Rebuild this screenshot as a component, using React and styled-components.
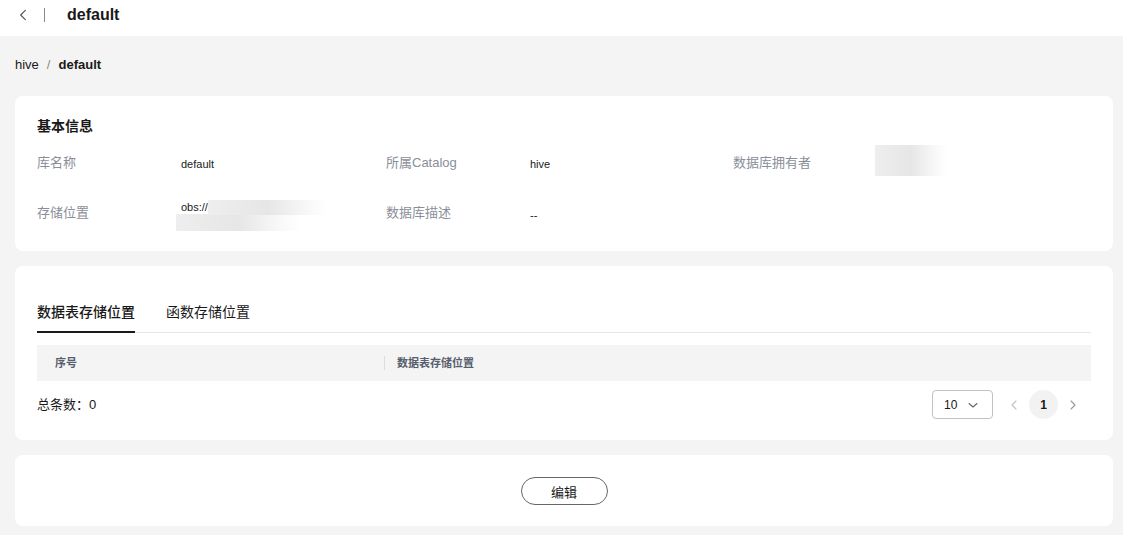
import React from "react";
import styled, { createGlobalStyle } from "styled-components";

const GlobalStyle = createGlobalStyle`
  html, body {
    margin: 0;
    padding: 0;
    background: #f4f4f4;
    font-family: "Liberation Sans", "Noto Sans CJK SC", sans-serif;
    color: #191919;
  }
  * { box-sizing: border-box; }
`;

const Page = styled.div`
  width: 1123px;
  min-height: 535px;
  background: #f4f4f4;
`;

const TopBar = styled.div`
  height: 36px;
  background: #fff;
  display: flex;
  align-items: center;
  padding-left: 16px;
  padding-bottom: 7px;
`;

const BackButton = styled.button`
  background: none;
  border: none;
  padding: 0;
  width: 14px;
  height: 14px;
  display: flex;
  align-items: center;
  justify-content: center;
  cursor: pointer;
`;

const Divider = styled.span`
  width: 1px;
  height: 14px;
  background: #8a8a8a;
  margin: 0 22px 0 14px;
`;

const Title = styled.h1`
  margin: 0;
  font-size: 16px;
  font-weight: 700;
  color: #191919;
`;

const Content = styled.div`
  padding: 0 10px 10px 15px;
  display: flex;
  flex-direction: column;
  gap: 15px;
`;

const Breadcrumb = styled.div`
  height: 60px;
  display: flex;
  align-items: center;
  font-size: 13px;
  color: #191919;
  padding-bottom: 4px;
  margin-bottom: -15px;
`;

const Crumb = styled.span`
  font-weight: ${p => (p.$current ? 700 : 400)};
`;

const Slash = styled.span`
  color: #8a8a8a;
  margin: 0 8px;
`;

const Card = styled.section`
  background: #fff;
  border-radius: 8px;
  padding: ${p => p.$pad || "20px 22px"};
`;

const SectionTitle = styled.h3`
  margin: 0 0 14px;
  font-size: 14px;
  font-weight: 700;
  line-height: 20px;
  color: #191919;
`;

const InfoGrid = styled.div`
  display: grid;
  grid-template-columns: 349px 347px 1fr;
  row-gap: 14px;
`;

const InfoItem = styled.div`
  display: flex;
  align-items: flex-start;
  min-height: 36px;
`;

const Label = styled.div`
  width: 144px;
  flex-shrink: 0;
  font-size: 13px;
  color: #8a8e99;
  line-height: 20px;
  padding-top: 3px;
`;

const Value = styled.div`
  font-size: 11px;
  color: #191919;
  line-height: 20px;
  padding-top: ${p => p.$top || "4px"};
`;

const Blur = styled.div`
  width: ${p => p.$w}px;
  height: ${p => p.$h}px;
  margin-left: ${p => p.$ml || 0}px;
  margin-top: ${p => p.$mt || 0}px;
  background: linear-gradient(90deg, #eeeeee 0%, #e6e6e6 50%, rgba(240,240,240,0.4) 85%, rgba(255,255,255,0) 100%);
`;

const ObsLine = styled.div`
  display: flex;
  align-items: flex-start;
  height: 14px;
  line-height: 14px;
`;

const Tabs = styled.div`
  display: flex;
  gap: 31px;
  border-bottom: 1px solid #e6e6e6;
  height: 40px;
  align-items: flex-end;
`;

const Tab = styled.div`
  font-size: 14px;
  line-height: 20px;
  padding-bottom: 9px;
  color: #191919;
  font-weight: ${p => (p.$active ? 500 : 400)};
  border-bottom: 2px solid ${p => (p.$active ? "#191919" : "transparent")};
  margin-bottom: -1px;
`;

const TableHead = styled.div`
  margin-top: 12px;
  height: 36px;
  background: #f4f4f4;
  display: grid;
  grid-template-columns: 347px 1fr;
  align-items: center;
`;

const HeadCell = styled.div`
  font-size: 11px;
  font-weight: 700;
  color: #575d6c;
  padding-left: ${p => (p.$first ? "18px" : "12px")};
  border-left: ${p => (p.$first ? "none" : "1px solid #dcdcdc")};
  line-height: 14px;
`;

const Footer = styled.div`
  display: flex;
  align-items: center;
  justify-content: space-between;
  margin-top: 9px;
  height: 29px;
`;

const Total = styled.div`
  font-size: 13px;
  color: #191919;
  margin-top: -2px;
`;

const Pager = styled.div`
  display: flex;
  align-items: center;
  margin-right: 11px;
`;

const Select = styled.div`
  width: 61px;
  height: 29px;
  border: 1px solid #c2c2c2;
  border-radius: 4px;
  display: flex;
  align-items: center;
  justify-content: space-between;
  padding: 0 13px 0 11px;
  font-size: 12px;
  color: #191919;
  margin-right: 14px;
`;

const Arrow = styled.span`
  width: 14px;
  display: flex;
  align-items: center;
  justify-content: center;
`;

const PageNum = styled.span`
  width: 29px;
  height: 29px;
  border-radius: 50%;
  background: #f2f2f2;
  display: flex;
  align-items: center;
  justify-content: center;
  font-size: 12px;
  font-weight: 700;
  color: #191919;
  margin: 0 8px 0 8px;
`;

const ActionBar = styled.div`
  display: flex;
  justify-content: center;
`;

const EditButton = styled.button`
  width: 87px;
  height: 28px;
  border: 1px solid #666;
  border-radius: 14px;
  background: #fff;
  font-family: inherit;
  font-size: 13px;
  color: #191919;
  cursor: pointer;
`;

const Chevron = ({ dir = "left", color = "#575d6c", size = 12 }) => {
  const paths = {
    left: "M8 2 L4 6 L8 10",
    right: "M4 2 L8 6 L4 10",
    down: "M2 4.5 L6 8 L10 4.5",
  };
  return (
    <svg width={size} height={size} viewBox="0 0 12 12" fill="none">
      <path d={paths[dir]} stroke={color} strokeWidth="1.1" strokeLinecap="round" strokeLinejoin="round" />
    </svg>
  );
};

export default function App() {
  return (
    <Page>
      <GlobalStyle />
      <TopBar>
        <BackButton aria-label="Back">
          <Chevron dir="left" color="#575d6c" size={14} />
        </BackButton>
        <Divider />
        <Title>default</Title>
      </TopBar>
      <Content>
        <Breadcrumb>
          <Crumb>hive</Crumb>
          <Slash>/</Slash>
          <Crumb $current>default</Crumb>
        </Breadcrumb>

        <Card $pad="20px 22px 15px">
          <SectionTitle>基本信息</SectionTitle>
          <InfoGrid>
            <InfoItem>
              <Label>库名称</Label>
              <Value>default</Value>
            </InfoItem>
            <InfoItem>
              <Label>所属Catalog</Label>
              <Value>hive</Value>
            </InfoItem>
            <InfoItem>
              <Label>数据库拥有者</Label>
              <Value $top="0px">
                <Blur $w={72} $h={31} $mt={-5} $ml={-2} />
              </Value>
            </InfoItem>
            <InfoItem>
              <Label>存储位置</Label>
              <Value $top="0px">
                <ObsLine>
                  obs://
                  <Blur $w={120} $h={15} />
                </ObsLine>
                <Blur $w={124} $h={17} $ml={-5} />
              </Value>
            </InfoItem>
            <InfoItem>
              <Label>数据库描述</Label>
              <Value $top="5px">--</Value>
            </InfoItem>
            <InfoItem />
          </InfoGrid>
        </Card>

        <Card $pad="27px 22px 21px">
          <Tabs>
            <Tab $active>数据表存储位置</Tab>
            <Tab>函数存储位置</Tab>
          </Tabs>
          <TableHead>
            <HeadCell $first>序号</HeadCell>
            <HeadCell>数据表存储位置</HeadCell>
          </TableHead>
          <Footer>
            <Total>总条数：0</Total>
            <Pager>
              <Select>
                <span>10</span>
                <Chevron dir="down" color="#666" size={12} />
              </Select>
              <Arrow>
                <Chevron dir="left" color="#c2c2c2" size={12} />
              </Arrow>
              <PageNum>1</PageNum>
              <Arrow>
                <Chevron dir="right" color="#999" size={12} />
              </Arrow>
            </Pager>
          </Footer>
        </Card>

        <Card $pad="22px 22px 21px">
          <ActionBar>
            <EditButton>编辑</EditButton>
          </ActionBar>
        </Card>
      </Content>
    </Page>
  );
}
